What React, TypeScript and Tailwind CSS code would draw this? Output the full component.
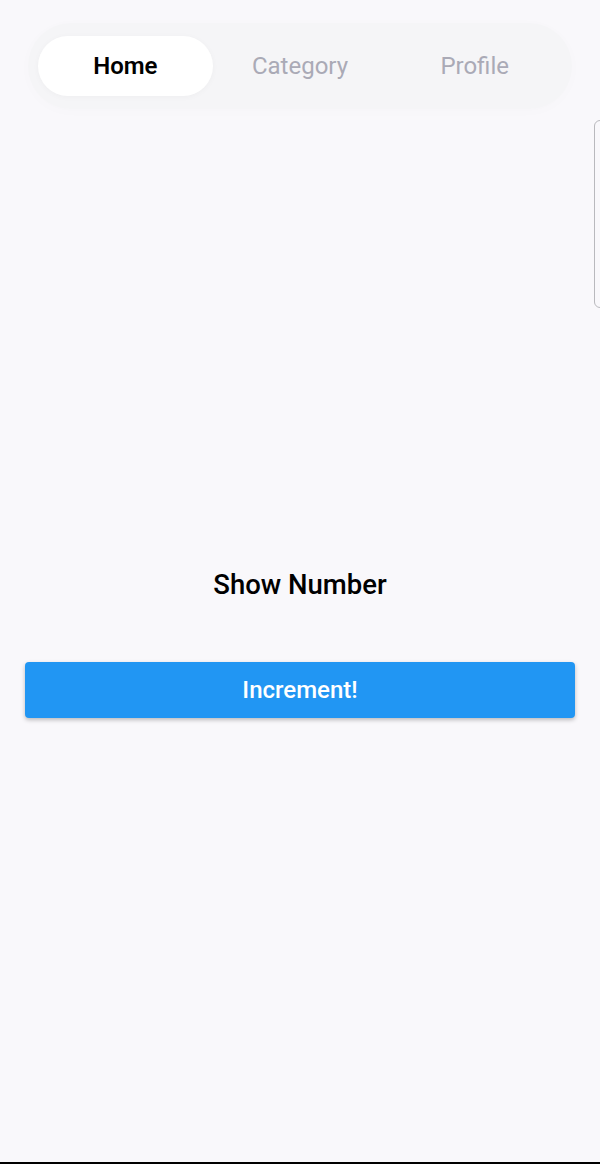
import React, { useState } from 'react';

const tabs = ['Home', 'Category', 'Profile'];

export default function App() {
  const [active, setActive] = useState(0);
  const [count, setCount] = useState(0);

  return (
    <div className="relative w-[600px] h-[1164px] bg-[#f9f8fb] overflow-hidden font-['Roboto',sans-serif] flex flex-col">
      {/* Tab bar */}
      <div className="px-[28px] pt-[23px]">
        <div className="flex bg-[#f5f5f7] rounded-full px-[10px] py-[13px] shadow-[0_2px_14px_rgba(0,0,0,0.015)]">
          {tabs.map((t, i) => (
            <button
              key={t}
              onClick={() => setActive(i)}
              className={
                i === active
                  ? 'flex-1 h-[60px] rounded-full bg-white text-black text-[24px] font-semibold shadow-[0_1px_6px_rgba(0,0,0,0.03)]'
                  : 'flex-1 h-[60px] rounded-full text-[#aaaab6] text-[24px] font-normal'
              }
            >
              {t}
            </button>
          ))}
        </div>
      </div>

      {/* Scroll handle on the right edge */}
      <div className="absolute left-[594px] top-[120px] w-[20px] h-[188px] rounded-[6px] border-[1.5px] border-[#b9b9bd]"></div>

      {/* Body */}
      <div className="flex flex-col items-center pt-[459px]">
        <div className="text-[27.5px] font-medium text-black leading-[34px]">
          {count === 0 ? 'Show Number' : count}
        </div>
        <button
          onClick={() => setCount(count + 1)}
          className="mt-[60px] w-[550px] h-[56px] rounded-[4px] bg-[#2196f3] text-white text-[24px] font-medium shadow-[0_2px_4px_rgba(0,0,0,0.25)]"
        >
          Increment!
        </button>
      </div>

      <div className="absolute left-0 bottom-0 w-full h-[2px] bg-black"></div>
    </div>
  );
}
